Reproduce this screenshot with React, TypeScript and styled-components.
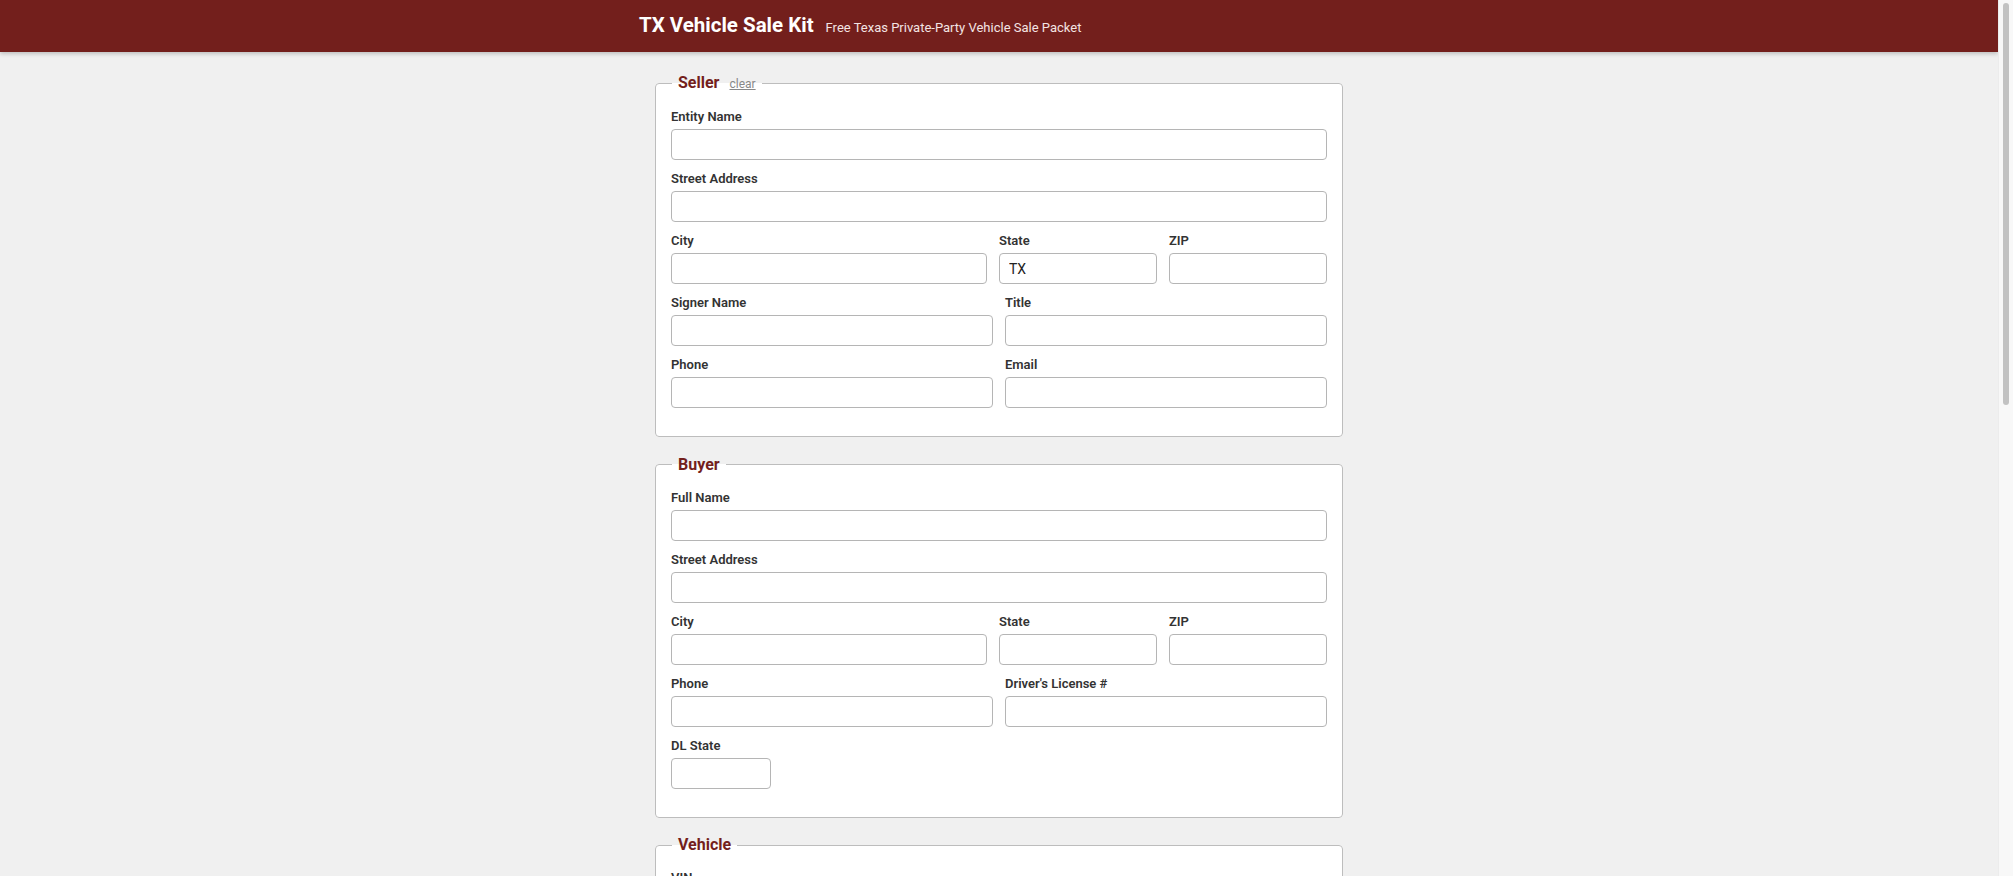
import React from "react";
import styled, { createGlobalStyle } from "styled-components";

const GlobalStyle = createGlobalStyle`
    html, body {
        margin: 0;
        padding: 0;
        background: #f0f0f0;
        font-family: Roboto, "Liberation Sans", Arial, sans-serif;
        color: #222;
    }
    body {
        padding-right: 15px;
    }
    * {
        box-sizing: border-box;
    }
`;

type Field = {
    label: string;
    value?: string;
};

type Row = {
    layout: "full" | "triple" | "pair" | "narrow";
    fields: Field[];
};

type Section = {
    title: string;
    clearable?: boolean;
    rows: Row[];
};

const sections: Section[] = [
    {
        title: "Seller",
        clearable: true,
        rows: [
            { layout: "full", fields: [{ label: "Entity Name" }] },
            { layout: "full", fields: [{ label: "Street Address" }] },
            { layout: "triple", fields: [{ label: "City" }, { label: "State", value: "TX" }, { label: "ZIP" }] },
            { layout: "pair", fields: [{ label: "Signer Name" }, { label: "Title" }] },
            { layout: "pair", fields: [{ label: "Phone" }, { label: "Email" }] },
        ],
    },
    {
        title: "Buyer",
        rows: [
            { layout: "full", fields: [{ label: "Full Name" }] },
            { layout: "full", fields: [{ label: "Street Address" }] },
            { layout: "triple", fields: [{ label: "City" }, { label: "State" }, { label: "ZIP" }] },
            { layout: "pair", fields: [{ label: "Phone" }, { label: "Driver's License #" }] },
            { layout: "narrow", fields: [{ label: "DL State" }] },
        ],
    },
    {
        title: "Vehicle",
        rows: [
            { layout: "full", fields: [{ label: "VIN" }] },
            { layout: "triple", fields: [{ label: "Make" }, { label: "Year" }, { label: "Model" }] },
            { layout: "pair", fields: [{ label: "Body Style" }, { label: "Color" }] },
            { layout: "pair", fields: [{ label: "Odometer Reading" }, { label: "Title Number" }] },
            { layout: "full", fields: [{ label: "License Plate" }] },
        ],
    },
    {
        title: "Sale",
        rows: [
            { layout: "pair", fields: [{ label: "Sale Price" }, { label: "Sale Date" }] },
            { layout: "full", fields: [{ label: "Lien Holder" }] },
            { layout: "full", fields: [{ label: "Notes" }] },
        ],
    },
];

const App = () => {
    return <>
        <GlobalStyle />
        <Header>
            <HeaderInner>
                <Title>{"TX Vehicle Sale Kit"}</Title>
                <Subtitle>{"Free Texas Private-Party Vehicle Sale Packet"}</Subtitle>
            </HeaderInner>
        </Header>
        <Main>
            {sections.map((section) => (
                <Group key={section.title}>
                    <Legend>
                        <LegendTitle>{section.title}</LegendTitle>
                        {section.clearable && <ClearLink href="#">{"clear"}</ClearLink>}
                    </Legend>
                    {section.rows.map((row, i) => (
                        <FormRow key={i} $layout={row.layout}>
                            {row.fields.map((field) => (
                                <FieldBox key={field.label}>
                                    <Label>{field.label}</Label>
                                    <Input defaultValue={field.value ?? ""} />
                                </FieldBox>
                            ))}
                        </FormRow>
                    ))}
                </Group>
            ))}
            <GenerateButton>{"Generate Packet"}</GenerateButton>
        </Main>
        <ScrollRail>
            <ScrollThumb />
        </ScrollRail>
    </>;
};

const Header = styled.header`
    background-color: #731f1c;
    color: #fff;
    height: 52px;
    box-shadow: 0 2px 4px rgba(0, 0, 0, 0.2);
    position: relative;
`;

const HeaderInner = styled.div`
    max-width: 720px;
    height: 100%;
    margin: 0 auto;
    display: flex;
    align-items: baseline;
    gap: 12px;
    padding-top: 13px;
`;

const Title = styled.h1`
    margin: 0;
    font-size: 20.5px;
    font-weight: 700;
    line-height: 24px;
`;

const Subtitle = styled.span`
    font-size: 13px;
    color: #f3e4e3;
`;

const Main = styled.main`
    max-width: 720px;
    margin: 0 auto;
    padding: 21px 16px 40px;
`;

const Group = styled.fieldset`
    margin: 0 0 17.5px;
    padding: 0 15px 16px;
    background: #fff;
    border: 1px solid #bdbdbd;
    border-radius: 4px;
`;

const Legend = styled.legend`
    padding: 0 6px;
    display: flex;
    align-items: baseline;
    gap: 10px;
    line-height: 20px;
    margin-left: 1px;
    margin-bottom: 15px;
`;

const LegendTitle = styled.span`
    font-size: 16px;
    font-weight: 700;
    color: #741f1c;
`;

const ClearLink = styled.a`
    font-size: 12px;
    color: #888;
    text-decoration: underline;
`;

const columns = {
    full: "1fr",
    triple: "2fr 1fr 1fr",
    pair: "1fr 1fr",
    narrow: "100px",
};

const FormRow = styled.div<{ $layout: Row["layout"] }>`
    display: grid;
    grid-template-columns: ${(props) => columns[props.$layout]};
    gap: 12px;
    margin-bottom: 11px;

    &:last-child {
        margin-bottom: 12px;
    }
`;

const FieldBox = styled.div`
    display: flex;
    flex-direction: column;
    min-width: 0;
`;

const Label = styled.label`
    font-size: 13px;
    font-weight: 600;
    line-height: 16px;
    color: #333;
    margin-bottom: 4px;
`;

const Input = styled.input`
    height: 31px;
    width: 100%;
    padding: 0 9px;
    font-family: inherit;
    font-size: 14px;
    color: #222;
    background: #fff;
    border: 1px solid #b5b5b5;
    border-radius: 4px;
    outline: none;
`;

const GenerateButton = styled.button`
    display: block;
    width: 100%;
    height: 44px;
    margin-top: 8px;
    font-family: inherit;
    font-size: 16px;
    font-weight: 700;
    color: #fff;
    background: #731f1c;
    border: none;
    border-radius: 4px;
`;

/* window scrollbar, drawn over the right edge */
const ScrollRail = styled.div`
    position: fixed;
    top: 0;
    right: 0;
    bottom: 0;
    width: 15px;
    padding: 3px 4px 0 4px;
    background: #f8f8f8;
    border-left: 1px solid #ececec;
`;

const ScrollThumb = styled.div`
    height: 402px;
    border-radius: 4px;
    background: #c2c2c2;
`;

export default App;
